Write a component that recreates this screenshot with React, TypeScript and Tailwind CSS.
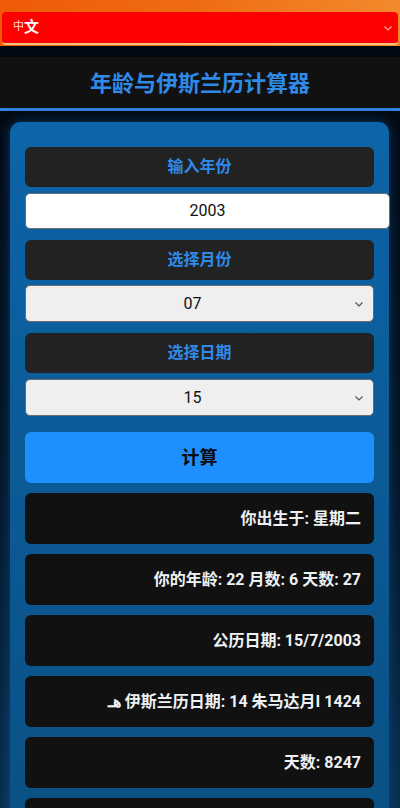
import React from "react";

const Chevron = () => (
  <svg width="12" height="12" viewBox="0 0 12 12" className="absolute right-[8px] top-1/2 -translate-y-1/2">
    <path d="M2.5 4.5 L6 8 L9.5 4.5" fill="none" stroke="#555" strokeWidth="1.2" />
  </svg>
);

const Label = ({ children }: { children: React.ReactNode }) => (
  <div className="h-[40px] rounded-[6px] bg-[#222222] flex items-center justify-center text-[16px] font-bold text-[#2f8ae8]">
    {children}
  </div>
);

const SelectBox = ({ value, className }: { value: string; className: string }) => (
  <div
    className={
      "relative h-[37px] rounded-[5px] bg-[#efefef] border border-[#6b6b6b] flex items-center justify-center pr-[14px] text-[16px] text-[#111] " +
      className
    }
  >
    {value}
    <Chevron />
  </div>
);

const Result = ({ children }: { children: React.ReactNode }) => (
  <div className="h-[51px] rounded-[6px] bg-[#111111] flex items-center justify-end pr-[13px] text-[16px] font-bold text-[#eef1f4]">
    {children}
  </div>
);

export default function App() {
  return (
    <div
      className="min-h-[808px] w-[400px] overflow-hidden bg-gradient-to-b from-[#02070e] via-[#041426] to-[#0a3457]"
      style={{ fontFamily: "Roboto, 'Noto Sans CJK SC', 'Noto Sans', sans-serif" }}
    >
      <div className="bg-gradient-to-r from-[#ee5a08] via-[#f06c14] to-[#f28a2c] pt-[12px] px-[2px] pb-[1px]">
        <div className="relative h-[33px] rounded-[4px] bg-[#ff0000] border-b-2 border-[#f4c47e] flex items-center pl-[11px]">
          <span className="text-[11px] text-[#ffdcdc]">中</span>
          <span className="text-[15px] font-bold text-white">文</span>
          <svg width="12" height="12" viewBox="0 0 12 12" className="absolute right-[4px] top-1/2 -translate-y-1/2">
            <path d="M2.5 4.5 L6 8 L9.5 4.5" fill="none" stroke="#ffb0a0" strokeWidth="1.1" />
          </svg>
        </div>
      </div>
      <div className="h-[11px]" />
      <div className="h-[51px] bg-[#111111] flex items-center justify-center pt-[2px] text-[22px] font-bold text-[#2f8ae8]">
        年龄与伊斯兰历计算器
      </div>
      <div className="h-[3px] bg-[#2f82e2]" />
      <div className="pt-[11px] px-[10px] pr-[11px]">
        <div className="rounded-[10px] bg-gradient-to-b from-[#0d64a8] to-[#0a4f82] pt-[25px] px-[15px] pb-[20px] shadow-[0_0_12px_rgba(20,100,170,0.5)]">
          <Label>输入年份</Label>
          <div className="mt-[6px] h-[36px] w-[calc(100%+16px)] rounded-[5px] bg-white border border-[#6b6b6b] flex items-center justify-center text-[16px] text-[#111]">
            2003
          </div>
          <div className="mt-[11px]">
            <Label>选择月份</Label>
          </div>
          <SelectBox value="07" className="mt-[5px]" />
          <div className="mt-[11px]">
            <Label>选择日期</Label>
          </div>
          <SelectBox value="15" className="mt-[6px]" />
          <div className="mt-[16px] h-[51px] rounded-[6px] bg-[#1e8fff] flex items-center justify-center text-[18px] font-bold text-[#0a0a0a]">
            计算
          </div>
          <div className="mt-[10px] flex flex-col gap-[10px]">
            <Result>你出生于: 星期二</Result>
            <Result>你的年龄: 22 月数: 6 天数: 27</Result>
            <Result>公历日期: 15/7/2003</Result>
            <Result>
              <span dir="ltr">
                <span className="text-[16px]">هـ</span> 伊斯兰历日期: 14 朱马达月I 1424
              </span>
            </Result>
            <Result>天数: 8247</Result>
            <Result>{""}</Result>
          </div>
        </div>
      </div>
    </div>
  );
}
